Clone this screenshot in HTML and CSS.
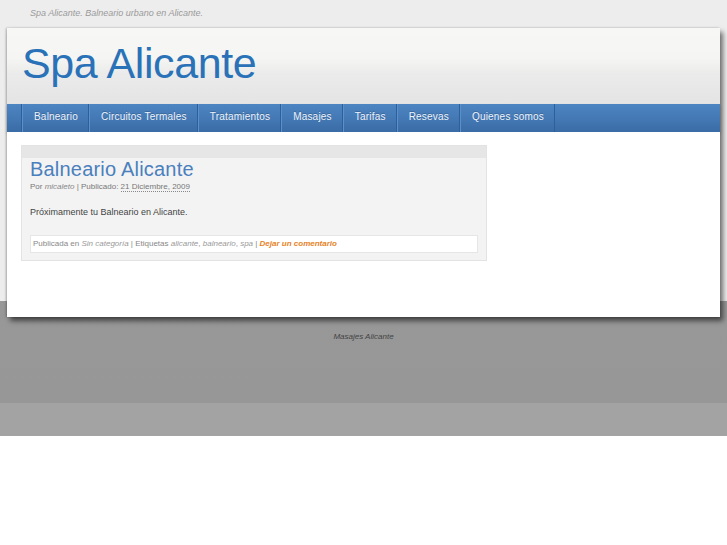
FILE: index.html
```html
<!DOCTYPE html>
<html>
<head>
<meta charset="utf-8">
<link rel="stylesheet" href="styles.css">
</head>
<body>
<div class="page">
  <div class="tagline">Spa Alicante. Balneario urbano en Alicante.</div>
  <div class="wrap">
    <header class="header">
      <h1 class="site-title">Spa Alicante</h1>
    </header>
    <nav class="nav">
      <span class="nav-lead"></span>
      <a class="nav-item">Balneario</a>
      <a class="nav-item">Circuitos Termales</a>
      <a class="nav-item">Tratamientos</a>
      <a class="nav-item">Masajes</a>
      <a class="nav-item">Tarifas</a>
      <a class="nav-item">Resevas</a>
      <a class="nav-item">Quienes somos</a>
    </nav>
    <main class="content">
      <article class="post">
        <div class="post-band"></div>
        <h2 class="post-title">Balneario Alicante</h2>
        <div class="post-meta">Por <em>micaleto</em> | Publicado: <span class="date">21 Diciembre, 2009</span></div>
        <p class="post-text">Próximamente tu Balneario en Alicante.</p>
        <div class="post-foot">Publicada en <em>Sin categoría</em> | Etiquetas <em>alicante</em>, <em>balneario</em>, <em>spa</em> | <a class="comment">Dejar un comentario</a></div>
      </article>
    </main>
  </div>
  <footer class="footer">Masajes Alicante</footer>
</div>
</body>
</html>
```
FILE: styles.css
```css
html, body {
  margin: 0;
  padding: 0;
}
body {
  font-family: "Liberation Sans", Arial, sans-serif;
  background: linear-gradient(to bottom, #ededed 0, #ededed 301px, #989898 301px, #979797 403px, #a3a3a3 403px, #a3a3a3 436px, #ffffff 436px);
  min-height: 545px;
}
.page {
  padding-top: 7px;
}
.tagline {
  font-size: 9px;
  font-style: italic;
  color: #9a9a9a;
  padding-left: 30px;
  height: 21px;
  line-height: 13px;
}
.wrap {
  margin-left: 7px;
  width: 713px;
  background: #fff;
  box-shadow: 3px 4px 5px rgba(0,0,0,0.55), -1px 0 2px rgba(0,0,0,0.25);
}
.header {
  height: 76px;
  background: linear-gradient(to bottom, #f7f7f5 0, #f5f5f3 40%, #ebebeb 60%, #e4e4e4 100%);
  display: flex;
  align-items: flex-start;
}
.site-title {
  margin: 10px 0 0 15px;
  font-family: "Liberation Sans", Arial, sans-serif;
  font-weight: normal;
  font-size: 43px;
  line-height: 50px;
  color: #2a72b8;
  letter-spacing: -0.4px;
}
.nav {
  height: 28px;
  display: flex;
  background: linear-gradient(to bottom, #4c85c2 0, #4479b5 50%, #3a6ca6 100%);
  box-shadow: 0 2px 3px rgba(0,0,0,0.15);
}
.nav-lead {
  width: 14px;
  border-right: 1px solid #2f5f98;
}
.nav-item {
  display: flex;
  align-items: center;
  padding: 0 10px 3px 11px;
  font-size: 10px;
  letter-spacing: 0.2px;
  color: #eef3fa;
  border-right: 1px solid #2f5f98;
  border-left: 1px solid #5a91cc;
  text-shadow: 0 -1px 0 rgba(0,0,0,0.2);
}
.content {
  height: 185px;
  padding: 13px 0 0 14px;
  box-sizing: border-box;
  background: #fff;
}
.post {
  width: 466px;
  height: 116px;
  box-sizing: border-box;
  background: #f3f3f3;
  border: 1px solid #e3e3e3;
  padding: 0 8px;
}
.post-band {
  height: 12px;
  margin: 0 -8px;
  background: #e6e6e6;
}
.post-title {
  margin: 0;
  font-weight: normal;
  font-size: 20px;
  line-height: 22px;
  color: #4a80bd;
  letter-spacing: 0.2px;
}
.post-meta {
  font-size: 8px;
  color: #777;
  margin-top: 1px;
  line-height: 11px;
}
.post-meta em { color: #888; }
.date {
  border-bottom: 1px dotted #888;
}
.post-text {
  margin: 14px 0 0;
  font-size: 9px;
  color: #444;
  line-height: 12px;
}
.post-foot {
  margin-top: 17px;
  background: #fff;
  border: 1px solid #e6e6e6;
  height: 16px;
  line-height: 15px;
  font-size: 8px;
  color: #888;
  padding-left: 2px;
}
.post-foot em { color: #999; }
.comment {
  color: #e6821f;
  font-weight: bold;
  font-style: italic;
}
.footer {
  text-align: center;
  font-size: 8px;
  font-style: italic;
  color: #444;
  margin-top: 15px;
}
```
